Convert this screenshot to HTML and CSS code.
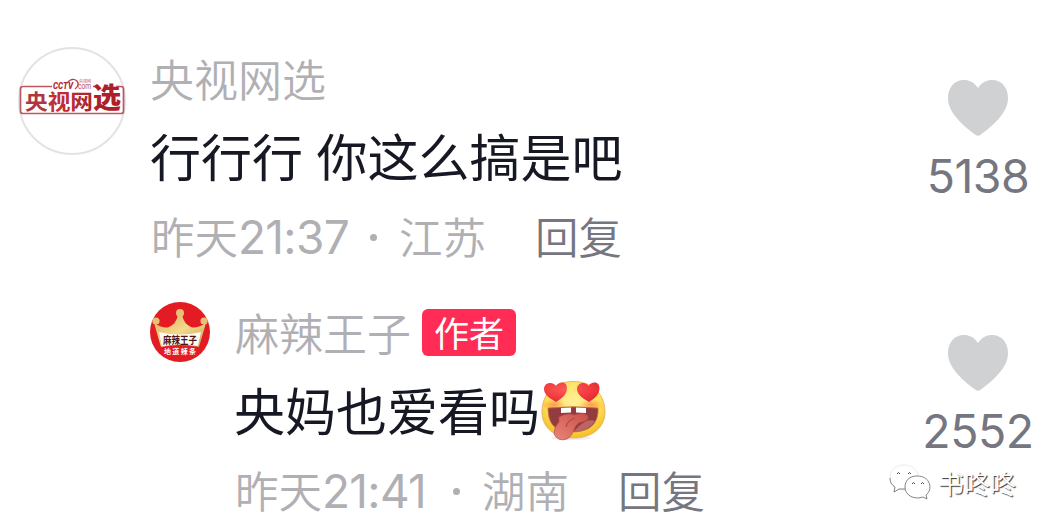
FILE: index.html
```html
<!DOCTYPE html>
<html lang="zh-CN">
<head>
  <meta charset="utf-8" />
  <title>评论</title>
  <link rel="stylesheet" href="styles.css">
</head>
<body>
  <main class="comments">
    <article class="comment">
      <svg class="avatar" viewBox="0 0 108 108">
        <defs>
          <linearGradient id="brand" x1="0" y1="0" x2="1" y2="0">
            <stop offset="0" stop-color="#a83a44" />
            <stop offset=".5" stop-color="#c42c35" />
            <stop offset="1" stop-color="#a8242d" />
          </linearGradient>
        </defs>
        <circle cx="54" cy="54" r="53" fill="#fff" stroke="#e3e3e5" stroke-width="2" />
        <path d="M34 39.500H5q-2.500 0-2.500 2.500v22q0 2.500 2.500 2.500h98q2.500 0 2.500-2.500V42q0-2.500-2.500-2.500h-5M75 39.500h5" fill="none" stroke="#bd5860" stroke-width="1.700" />
        <text class="logo-text" x="7" y="61.500" textLength="68" lengthAdjust="spacingAndGlyphs" fill="url(#brand)">央视网</text>
        <text class="logo-last" x="75" y="61" fill="#ad2029">选</text>
        <text class="logo-cctv" x="35" y="42" textLength="20" lengthAdjust="spacingAndGlyphs">CCTV</text>
        <path d="M49 36q5-6 10-2q3 4-2 8" fill="none" stroke="#bd3a40" stroke-width="1.300" />
        <text class="logo-com" x="60" y="42" textLength="13" lengthAdjust="spacingAndGlyphs">com</text>
        <text class="logo-mini" x="61" y="36">央视网</text>
      </svg>
      <div class="body">
        <div class="name">央视网选</div>
        <p class="text">行行行 你这么搞是吧</p>
        <div class="meta"><span>昨天</span><span class="num">21:37</span><span class="dot"></span><span>江苏</span><span class="reply">回复</span></div>
      </div>
      <div class="like">
        <svg class="heart" viewBox="0 0 60 56"><path d="M30 8C26 2 21 0 16 0C6 0 0 8 0 18C0 32 13 44 27 54.500Q30 57 33 54.500C47 44 60 32 60 18C60 8 54 0 44 0C39 0 34 2 30 8Z" fill="#d0d1d3" /></svg>
        <span>5138</span>
      </div>
    </article>

    <article class="comment child">
      <svg class="avatar" viewBox="0 0 60 60">
        <defs>
          <linearGradient id="gold" x1="0" y1="0" x2="1" y2="1">
            <stop offset="0" stop-color="#d8aa55" />
            <stop offset=".5" stop-color="#f3da8d" />
            <stop offset="1" stop-color="#c99a48" />
          </linearGradient>
        </defs>
        <circle cx="30" cy="30" r="30" fill="#e31b23" />
        <path d="M4 21Q14 27 19 25Q26 22 28 13H32Q34 22 41 25Q46 27 56 21L49 45Q30 41 11 45Z" fill="url(#gold)" />
        <circle cx="6" cy="19" r="3.600" fill="#e9c078" />
        <circle cx="30" cy="11" r="4" fill="#e9c078" />
        <circle cx="54" cy="19" r="3.600" fill="#e9c078" />
        <path d="M9 30Q30 35 51 30L48 44Q30 41 12 44Z" fill="#fffaf4" />
        <text class="crown-title" x="13" y="41.500" textLength="34" lengthAdjust="spacingAndGlyphs">麻辣王子</text>
        <text class="crown-sub" x="14" y="52" textLength="32">地道辣条</text>
      </svg>
      <div class="body">
        <div class="name">麻辣王子<span class="tag">作者</span></div>
        <p class="text">央妈也爱看吗<svg class="emoji" viewBox="0 0 66 62">
            <defs>
              <radialGradient id="face" cx=".5" cy=".35" r=".65">
                <stop offset="0" stop-color="#fff19a" />
                <stop offset=".65" stop-color="#ffdf55" />
                <stop offset="1" stop-color="#f5bd25" />
              </radialGradient>
              <linearGradient id="tongue" x1="1" y1="0" x2="0" y2="1">
                <stop offset="0" stop-color="#c94f48" />
                <stop offset="1" stop-color="#ea8579" />
              </linearGradient>
              <radialGradient id="love" cx=".4" cy=".35" r=".65">
                <stop offset="0" stop-color="#ff5b58" />
                <stop offset="1" stop-color="#e92c34" />
              </radialGradient>
              <radialGradient id="blush">
                <stop offset="0" stop-color="#ff7045" stop-opacity=".65" />
                <stop offset="1" stop-color="#ff7045" stop-opacity="0" />
              </radialGradient>
            </defs>
            <ellipse cx="30" cy="57" rx="20" ry="2" fill="#ddd" opacity=".5" />
            <path d="M32 .5C53 .5 64 15 64 31C64 48 49 57 33 57C14 57 1 47 1 31C1 14 12 .5 32 .5Z" fill="url(#face)" stroke="#e6b668" stroke-width="1" />
            <ellipse cx="13" cy="24" rx="12" ry="6" fill="url(#blush)" />
            <ellipse cx="50" cy="24" rx="12" ry="6" fill="url(#blush)" />
            <path d="M7 27Q32 24.500 57 27C58 43 48 51 31 51C14 51 7 43 7 27Z" fill="#943b40" stroke="#c57a3f" stroke-width=".8" />
            <path d="M38 45Q47 37 54 40Q48 50 32 51Z" fill="#bb6661" />
            <path d="M20 27L30 26.500V31.500L20 32ZM35 26.500L45 27V32L35 31.500Z" fill="#fff" />
            <path d="M18 36Q27 31 33 34Q42 31 46 34Q50 39 41 41C32 42 34 54 26 58Q17 61 13 53Q13 46 18 41Z" fill="url(#tongue)" stroke="#b94b40" stroke-width=".7" />
            <path d="M34 37Q26 40 25 46" fill="none" stroke="#b9453f" stroke-width="1.200" />
            <path d="M15 5C12 0 3 1 3 8C3 14 10 18 15 21C20 18 26 14 26 7C26 0 18 0 15 5ZM47.500 5C45 0 36 1 36 8C36 14 43 18 48 21C53 18 58.500 14 58.500 7C58.500 0 50 0 47.500 5Z" fill="url(#love)" />
          </svg></p>
        <div class="meta"><span>昨天</span><span class="num">21:41</span><span class="dot"></span><span>湖南</span><span class="reply">回复</span></div>
      </div>
      <div class="like">
        <svg class="heart" viewBox="0 0 60 56"><path d="M30 8C26 2 21 0 16 0C6 0 0 8 0 18C0 32 13 44 27 54.500Q30 57 33 54.500C47 44 60 32 60 18C60 8 54 0 44 0C39 0 34 2 30 8Z" fill="#d0d1d3" /></svg>
        <span>2552</span>
      </div>
    </article>
  </main>

  <div class="watermark">
    <svg viewBox="0 0 42 37">
      <g fill="#fff">
        <path d="M15 1C6 1 1 7 1 14Q1 20 6 23L5 28L10 25Q15 27 20 26C27 24 30 18 29 12C28 5 22 1 15 1Z" stroke="#ddd" stroke-width=".6" />
        <path d="M1 14Q1 20 6 23L5 28L10 25H16" stroke="#777" stroke-width=".9" />
        <path d="M28 12C20 12 16 17 16 23C16 32 26 36 34 33L38 35L37 31C44 26 42 12 28 12Z" stroke="#777" stroke-width=".9" />
      </g>
      <path d="M8 10q1.500-3 3 0M19 10q1.500-3 3 0M23 20q1.500-3 3 0M32 20q1.500-3 3 0" fill="none" stroke="#444" stroke-width="1" />
    </svg>
    <span>书咚咚</span>
  </div>
</body>
</html>
```

FILE: styles.css
```css
* {
  box-sizing: border-box;
}
body {
  margin: 0;
  height: 530px;
  overflow: hidden;
  background: #fff;
  font-family: "Noto Sans CJK SC", sans-serif;
  font-weight: 350;
  color: #161823;
}
.comments {
  padding: 47px 0 0 18px;
}
.comment {
  display: flex;
  align-items: flex-start;
  height: 255px;
}
.avatar {
  width: 108px;
  height: 108px;
  flex: none;
  margin-right: 24px;
}
.body {
  flex: 1;
  padding-top: 9px;
}
.child {
  height: 228px;
  padding-left: 132px;
}
.child .avatar {
  width: 60px;
  height: 60px;
}
.name {
  display: flex;
  align-items: center;
  height: 44px;
  line-height: 44px;
  font-size: 44px;
  color: #b0b0b4;
}
.child .name {
  padding-left: 1px;
}
.tag {
  height: 47px;
  margin-left: 11px;
  padding: 0 12px;
  border-radius: 6px;
  background: #ff2c55;
  color: #fff;
  font-size: 35px;
  line-height: 46px;
  font-weight: 400;
}
.child .body {
  padding-top: 8px;
}
.text {
  display: flex;
  align-items: center;
  margin: 28px 0 0;
  height: 54px;
  line-height: 54px;
  font-size: 51px;
  font-weight: 400;
  white-space: pre;
  word-spacing: 2px;
}
.emoji {
  width: 66px;
  height: 62px;
  margin: 5px 0 0 1px;
}
.meta {
  display: flex;
  align-items: center;
  margin-top: 31px;
  padding-left: 1px;
  height: 46px;
  line-height: 46px;
  font-size: 43.5px;
  color: #b0b0b4;
}
.num {
  width: 112px;
  padding-top: 1px;
  font-family: Inter, sans-serif;
  font-size: 46px;
  font-weight: 400;
  letter-spacing: -0.7px;
}
.dot {
  width: 7px;
  height: 7px;
  margin: 2px 22px 0 20px;
  border-radius: 50%;
  background: #b0b0b4;
}
.child .dot {
  margin-left: 19px;
}
.reply {
  margin-left: 49px;
  color: #757680;
}
.like {
  display: flex;
  flex-direction: column;
  align-items: center;
  width: 142px;
  padding-top: 33px;
  font-family: Inter, sans-serif;
  font-size: 46.5px;
  font-weight: 400;
  letter-spacing: -0.5px;
  line-height: 54px;
  color: #757680;
}
.heart {
  width: 60px;
  height: 56px;
  margin-bottom: 13px;
}
.logo-text {
  font-size: 21px;
  font-weight: 700;
}
.logo-last {
  font-size: 28px;
  font-weight: 900;
}
.logo-cctv {
  font: italic 900 9px Roboto, sans-serif;
  fill: #b52c35;
}
.logo-com {
  font: 9px Roboto, sans-serif;
  fill: #bd464c;
}
.logo-mini {
  font-size: 4px;
  fill: #bd464c;
}
.crown-title {
  font-size: 10px;
  font-weight: 700;
  fill: #4a1716;
}
.crown-sub {
  font-size: 7px;
  font-weight: 700;
  fill: #fff;
}
.watermark {
  position: absolute;
  left: 889px;
  top: 464px;
  display: flex;
  align-items: center;
  gap: 7px;
  font-size: 26px;
  line-height: 35px;
  color: #fff;
  text-shadow: 1px 1px 1px #333;
}
.watermark svg {
  width: 42px;
  height: 37px;
}
```
